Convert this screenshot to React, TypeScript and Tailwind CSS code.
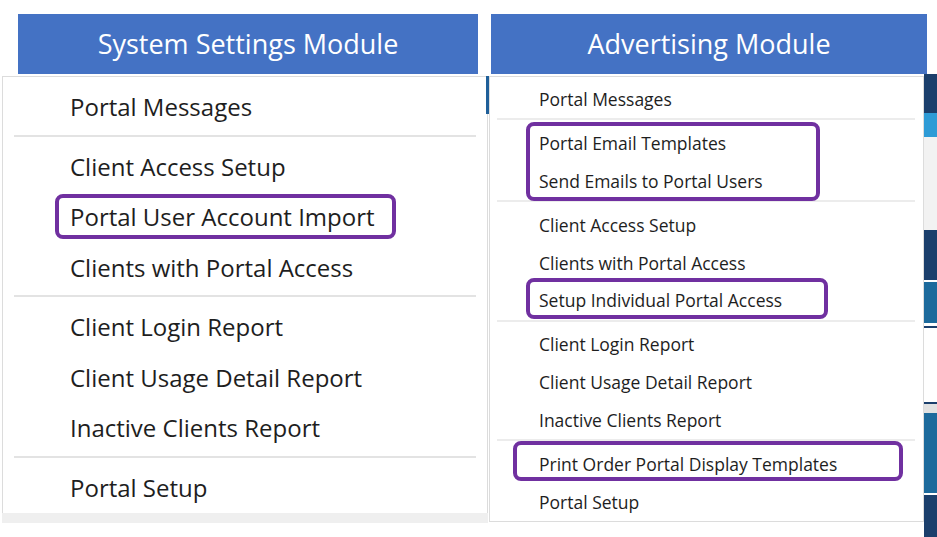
const FONT = { fontFamily: '"Open Sans", "Noto Sans", sans-serif' };

const LEFT_SECTIONS = [
  ['Portal Messages'],
  ['Client Access Setup', 'Portal User Account Import', 'Clients with Portal Access'],
  ['Client Login Report', 'Client Usage Detail Report', 'Inactive Clients Report'],
  ['Portal Setup'],
];

// colour bands of the app window peeking out at the right edge
const EDGE = [
  { h: 39, c: 'bg-[#1b3f6c]' },
  { h: 24, c: 'bg-[#2e9bd6]' },
  { h: 93, c: 'bg-[#f2f2f2]' },
  { h: 50, c: 'bg-[#1b3f6c]' },
  { h: 2, c: 'bg-white' },
  { h: 41, c: 'bg-[#1d6a9c]' },
  { h: 3, c: 'bg-white' },
  { h: 2, c: 'bg-[#1b3f6c]' },
  { h: 74, c: 'bg-white' },
  { h: 2, c: 'bg-[#1b3f6c]' },
  { h: 9, c: 'bg-[#e2e2e2]' },
  { h: 80, c: 'bg-[#1d6a9c]' },
  { h: 2, c: 'bg-white' },
  { h: 42, c: 'bg-[#1b3f6c]' },
];

function Box({ className }: { className: string }) {
  return <div className={`pointer-events-none absolute rounded-[8px] border-[4px] border-[#7030a0] ${className}`} />;
}

function LeftRow({ label }: { label: string }) {
  return (
    <div className="relative flex h-[50.5px] items-center pl-[67px] text-[24px] text-[#1e1e1e]">
      {label}
      {label === 'Portal User Account Import' && <Box className="left-[52px] top-[2px] h-[45px] w-[341px]" />}
    </div>
  );
}

function RightRow({ label }: { label: string }) {
  return <div className="flex h-[38px] items-center pl-[49px] text-[17.5px] text-[#1e1e1e]">{label}</div>;
}

function RightDivider() {
  return <div className="mb-[4px] ml-[7px] mr-[8px] h-[2px] bg-[#ececec]" />;
}

export default function App() {
  return (
    <div className="flex h-[537px] w-[937px] flex-col overflow-hidden bg-white" style={FONT}>
      {/* module titles */}
      <div className="flex pt-[14px]">
        <div className="ml-[18px] flex h-[60px] w-[460px] items-center justify-center bg-[#4472c4] text-[27px] text-white">
          System Settings Module
        </div>
        <div className="ml-[13px] flex h-[60px] w-[436px] items-center justify-center bg-[#4472c4] text-[27px] text-white">
          Advertising Module
        </div>
      </div>

      <div className="flex flex-1">
        {/* System Settings menu */}
        <div className="flex w-[489px] flex-col pt-[2px]">
          <div className="relative ml-[2px] flex h-[437px] w-[486px] flex-col border-x border-t border-[#dcdcdc] pt-[5px]">
            {LEFT_SECTIONS.map((section, i) => (
              <div key={i}>
                {i > 0 && <div className="mx-[11px] mb-[5px] mt-[2px] h-[2px] bg-[#e3e3e3]" />}
                {section.map((label) => (
                  <LeftRow key={label} label={label} />
                ))}
              </div>
            ))}
            <div className="absolute right-[-2px] top-[-1px] h-[38px] w-[3px] bg-[#1f5f99]" />
          </div>
          <div className="ml-[2px] h-[10px] w-[486px] bg-[#efefef]" />
        </div>

        {/* Advertising menu */}
        <div className="flex w-[435px] flex-col pt-[2px]">
          <div className="flex h-[446px] flex-col border border-[#dcdcdc] pt-[3px]">
            <RightRow label="Portal Messages" />
            <RightDivider />
            <div className="relative">
              <RightRow label="Portal Email Templates" />
              <RightRow label="Send Emails to Portal Users" />
              <Box className="left-[36px] top-[-2px] h-[79px] w-[294px]" />
            </div>
            <RightDivider />
            <RightRow label="Client Access Setup" />
            <RightRow label="Clients with Portal Access" />
            <div className="relative">
              <RightRow label="Setup Individual Portal Access" />
              <Box className="left-[36px] top-[-4px] h-[41px] w-[302px]" />
            </div>
            <RightDivider />
            <RightRow label="Client Login Report" />
            <RightRow label="Client Usage Detail Report" />
            <RightRow label="Inactive Clients Report" />
            <RightDivider />
            <div className="relative">
              <RightRow label="Print Order Portal Display Templates" />
              <Box className="left-[23px] top-[-4px] h-[40px] w-[390px]" />
            </div>
            <RightRow label="Portal Setup" />
          </div>
        </div>

        {/* edge of the window behind */}
        <div className="flex w-[13px] flex-col">
          {EDGE.map((b, i) => (
            <div key={i} className={b.c} style={{ height: b.h }} />
          ))}
        </div>
      </div>
    </div>
  );
}
